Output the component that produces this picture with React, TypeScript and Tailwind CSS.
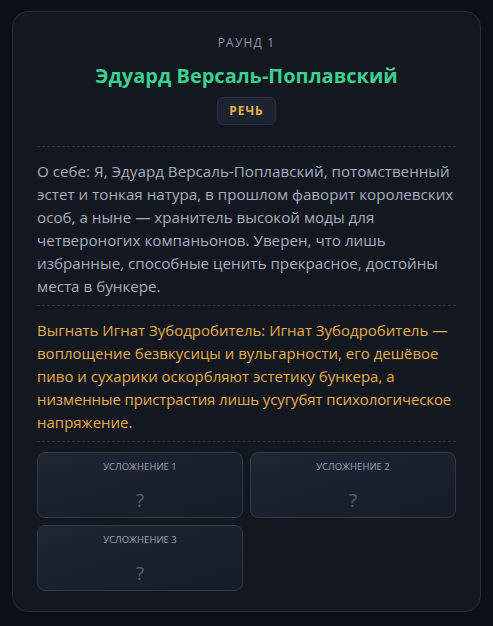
export default function App() {
  const complications = ["Усложнение 1", "Усложнение 2", "Усложнение 3"]

  return (
    <div
      className="min-h-screen bg-[#0b0f17] px-3 pt-[11px]"
      style={{ fontFamily: '"Open Sans", "Noto Sans", sans-serif' }}
    >
      <div className="rounded-2xl border border-[#262d3b] bg-[#121720] px-6 pb-5 pt-[21px]">
        {/* Header */}
        <div className="flex flex-col items-center">
          <p className="text-[12px] uppercase leading-5 tracking-[0.1em] text-[#8b95a7]">
            Раунд 1
          </p>
          <h1 className="mt-[9px] text-[20px] font-bold leading-7 text-[#3ccf8e]">
            Эдуард Версаль-Поплавский
          </h1>
          <span className="mt-[7px] rounded-md border border-[#2a3345] bg-[#1b2230] px-[11px] py-[5px] text-[12px] font-bold uppercase leading-[16px] tracking-[0.08em] text-[#e8b04a]">
            Речь
          </span>
        </div>

        <div className="mt-[21px] border-t border-dashed border-[#2c3444]" />

        {/* About */}
        <p className="pb-[7px] pt-[13px] text-[15.2px] leading-[23px] text-[#a4adbb]">
          О себе: Я, Эдуард Версаль-Поплавский, потомственный эстет и тонкая
          натура, в прошлом фаворит королевских особ, а ныне — хранитель
          высокой моды для четвероногих компаньонов. Уверен, что лишь
          избранные, способные ценить прекрасное, достойны места в бункере.
        </p>

        <div className="border-t border-dashed border-[#2c3444]" />

        {/* Vote */}
        <p className="whitespace-nowrap pb-[7px] pt-[13px] text-[15px] leading-[23px] text-[#e2ad4a]">
          Выгнать Игнат Зубодробитель: Игнат Зубодробитель —
          <br />
          воплощение безвкусицы и вульгарности, его дешёвое
          <br />
          пиво и сухарики оскорбляют эстетику бункера, а
          <br />
          <span className="tracking-[-0.1px]">
            низменные пристрастия лишь усугубят психологическое
          </span>
          <br />
          напряжение.
        </p>

        <div className="border-t border-dashed border-[#2c3444]" />

        {/* Complications */}
        <div className="mt-[10px] grid grid-cols-2 gap-[7px]">
          {complications.map((label) => (
            <div
              key={label}
              className="flex h-[66px] flex-col items-center rounded-lg border border-[#303a4c] bg-gradient-to-br from-[#1e2533] to-[#161c27] pt-[6px]"
            >
              <span className="text-[9.5px] font-medium uppercase leading-4 text-[#9aa3b3]">
                {label}
              </span>
              <span className="mt-[13px] text-[19px] leading-6 text-[#566173]">?</span>
            </div>
          ))}
        </div>
      </div>
    </div>
  )
}
